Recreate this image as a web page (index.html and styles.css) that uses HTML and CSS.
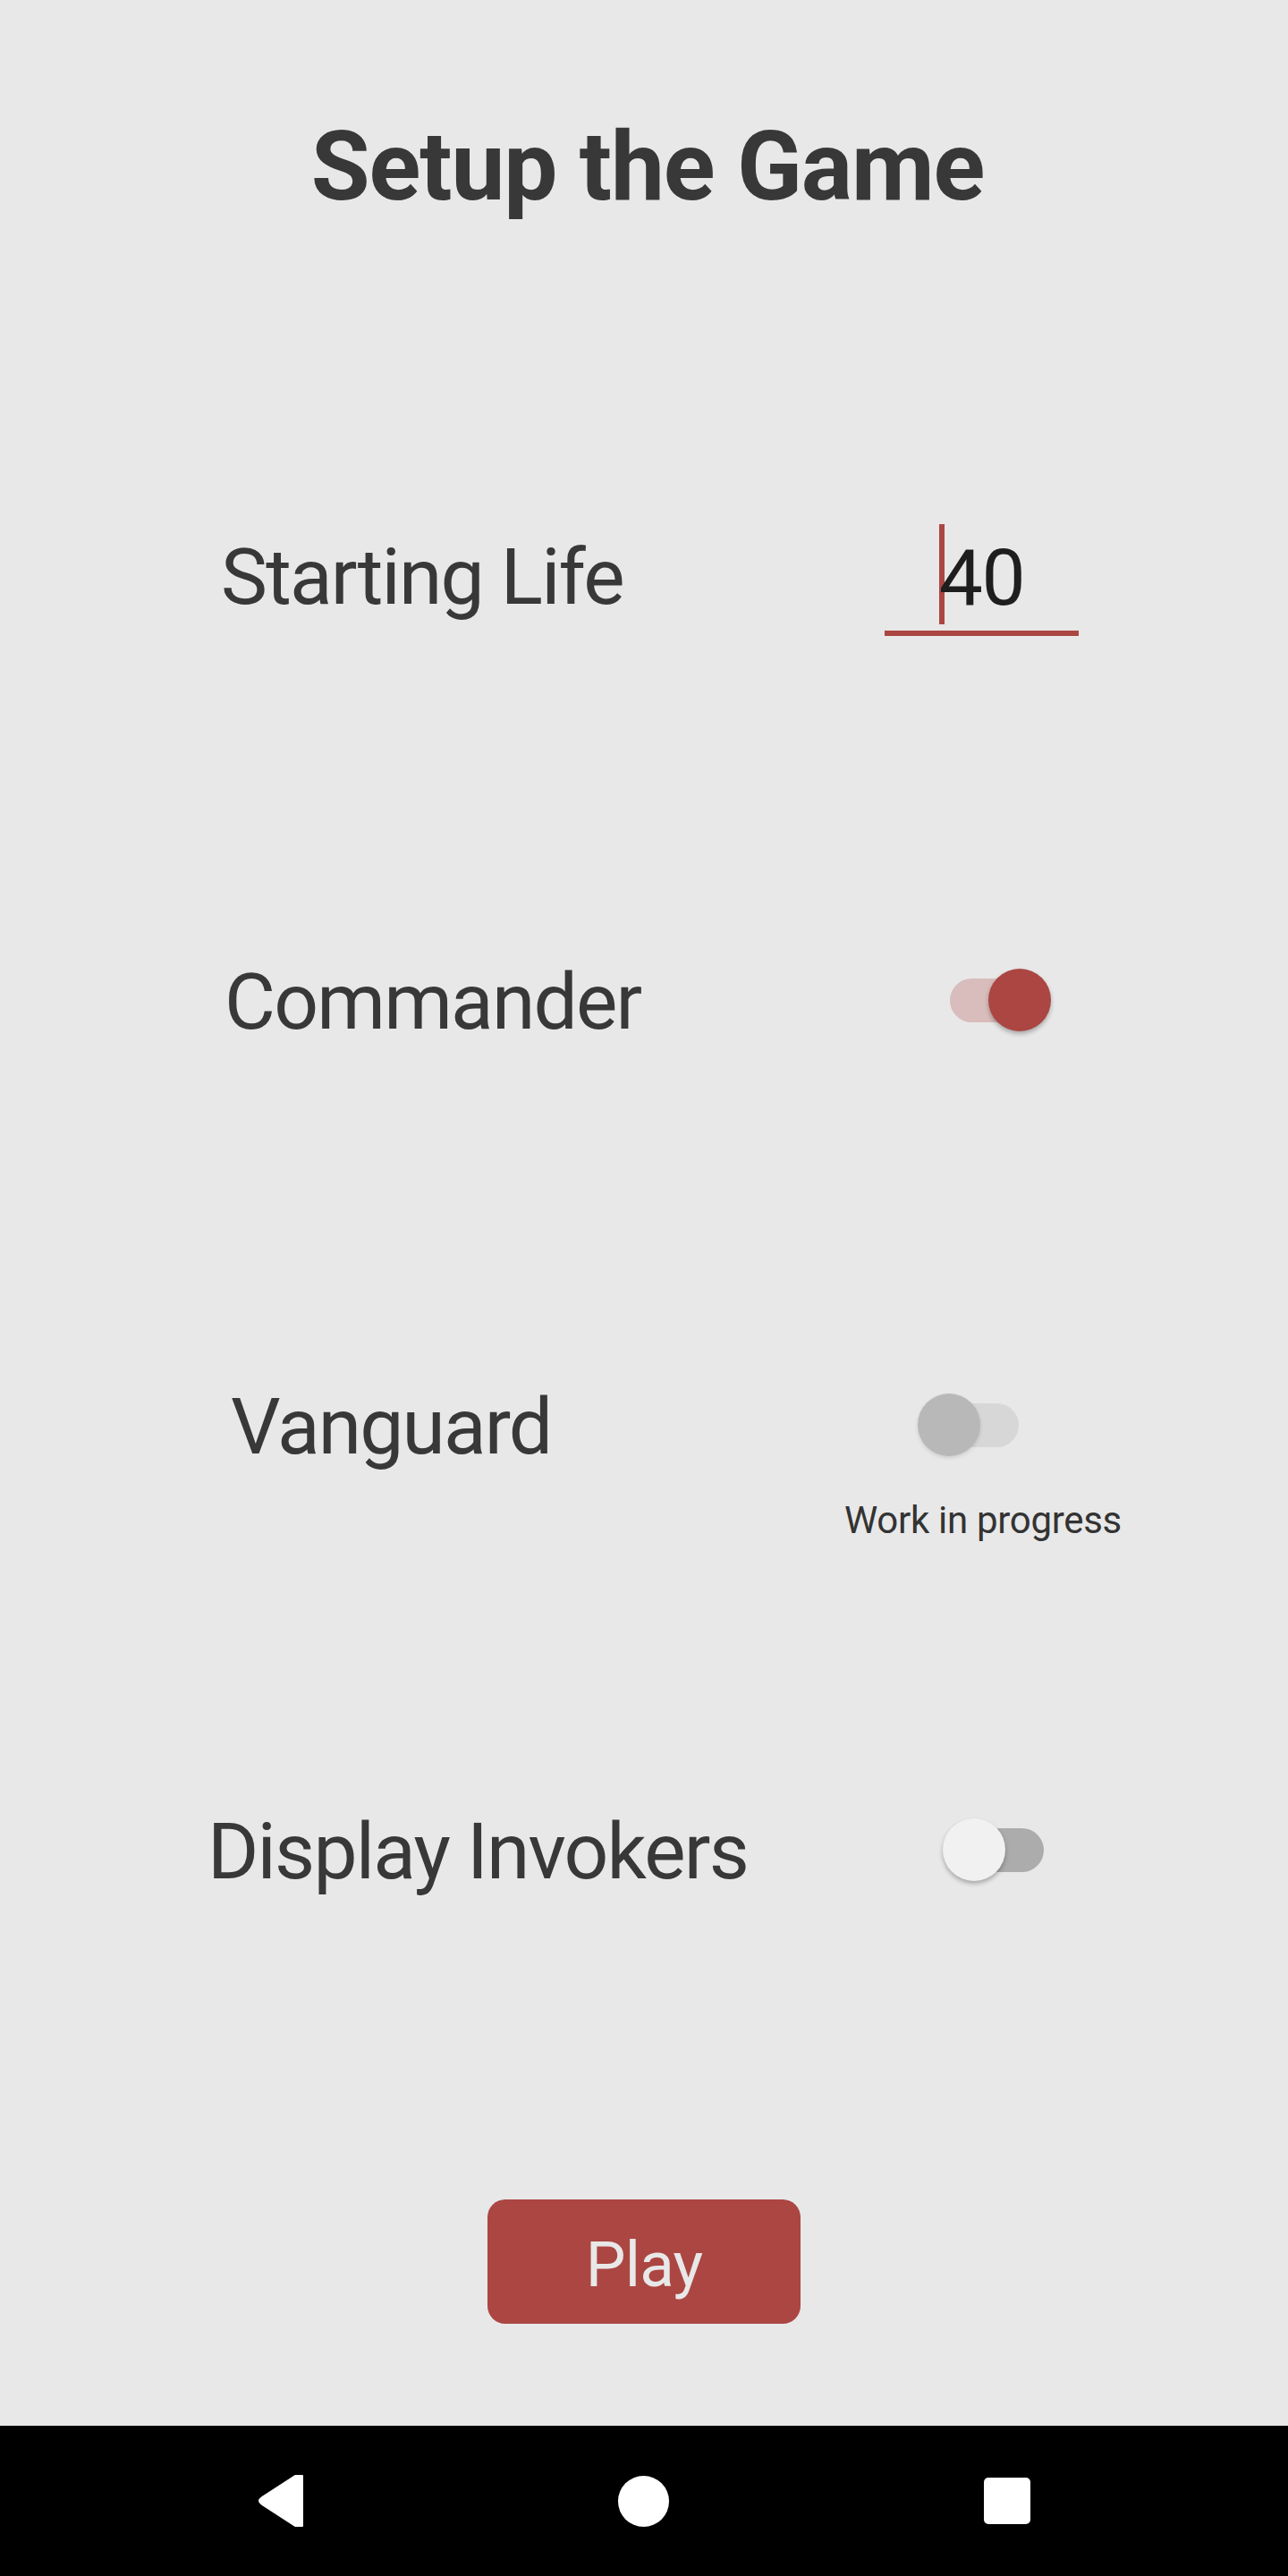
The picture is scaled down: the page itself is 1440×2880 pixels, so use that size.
FILE: index.html
```html
<!DOCTYPE html>
<html lang="en">
<head>
<meta charset="utf-8">
<title>Setup the Game</title>
<link rel="stylesheet" href="styles.css">
</head>
<body>
<div class="screen">
  <h1 class="title">Setup the Game</h1>
  <div class="settings">
    <div class="row row-life">
      <div class="label">Starting Life</div>
      <div class="control">
        <div class="field">
          <div class="field-text"><span class="caret"></span>40</div>
          <div class="field-line"></div>
        </div>
      </div>
    </div>
    <div class="row row-commander">
      <div class="label">Commander</div>
      <div class="control">
        <div class="switch switch-on"><span class="track"></span><span class="thumb"></span></div>
      </div>
    </div>
    <div class="row row-vanguard">
      <div class="label">Vanguard</div>
      <div class="control">
        <div class="switch switch-disabled"><span class="track"></span><span class="thumb"></span></div>
      </div>
      <div class="caption">Work in progress</div>
    </div>
    <div class="row row-invokers">
      <div class="label">Display Invokers</div>
      <div class="control">
        <div class="switch switch-off"><span class="track"></span><span class="thumb"></span></div>
      </div>
    </div>
  </div>
  <button class="play">Play</button>
</div>
<nav class="navbar">
  <svg class="nav-back" width="60" height="60" viewBox="0 0 60 60"><path d="M52 2 L52 58 L44 58 L7 34 Q1 30 7 26 L44 2 Z" fill="#fff" stroke="#fff" stroke-width="2" stroke-linejoin="round"/></svg>
  <span class="nav-home"></span>
  <span class="nav-recent"></span>
</nav>
</body>
</html>
```

FILE: styles.css
```css
html, body {
  margin: 0;
  padding: 0;
}
body {
  background: #e8e8e8;
  font-family: Roboto, "Noto Sans", sans-serif;
  color: #383838;
  width: 1440px;
}
.screen {
  height: 2712px;
  display: flex;
  flex-direction: column;
}
.title {
  margin: 0;
  padding-top: 133px;
  padding-left: 8px;
  font-size: 107px;
  line-height: 107px;
  font-weight: 700;
  letter-spacing: -1.1px;
  text-align: center;
  color: #383838;
}
.settings {
  margin-top: 336px;
  display: flex;
  flex-direction: column;
}
.row {
  display: grid;
  grid-template-columns: 890px 420px;
  grid-template-rows: 140px;
  align-items: center;
  margin-bottom: 335px;
}
.row-vanguard {
  margin-bottom: 280px;
}
.row-invokers {
  margin-bottom: 0;
}
.label {
  font-size: 87.5px;
  line-height: 1;
  letter-spacing: -1.8px;
  white-space: nowrap;
}
.row-life .label { padding-left: 247px; }
.row-commander .label { padding-left: 251px; }
.row-vanguard .label { padding-left: 258px; }
.row-invokers .label { padding-left: 232px; }

.control {
  display: flex;
  justify-content: center;
  align-items: center;
}
.field {
  width: 217px;
  margin-top: 5px;
  margin-right: 5px;
}
.field-text {
  font-size: 87.5px;
  line-height: 112px;
  letter-spacing: -1.5px;
  text-align: center;
  color: #1e1e1e;
}
.caret {
  display: inline-block;
  width: 6px;
  height: 112px;
  margin-right: -6px;
  vertical-align: -22px;
  background: #ab4642;
}
.field-line {
  margin-top: 3px;
  height: 6px;
  background: #ab4642;
}
.switch {
  position: relative;
  width: 116px;
  height: 70px;
}
.track {
  position: absolute;
  left: 3px;
  right: 3px;
  top: 11px;
  height: 49px;
  border-radius: 25px;
}
.thumb {
  position: absolute;
  top: 0;
  width: 70px;
  height: 70px;
  border-radius: 50%;
  box-shadow: 0 3px 5px rgba(0, 0, 0, 0.28);
}
.switch-on { margin-left: 34px; }
.switch-on .track { background: #d9bcbc; }
.switch-on .thumb { right: 0; background: #ab4642; }
.switch-disabled { margin-right: 32px; margin-top: -6px; }
.switch-disabled .track { background: #d7d7d7; }
.switch-disabled .thumb { left: 0; background: #b8b8b8; box-shadow: 0 2px 4px rgba(0, 0, 0, 0.12); }
.switch-off { margin-left: 24px; margin-top: -6px; }
.switch-off .track { background: #acacac; }
.switch-off .thumb { left: 0; background: #f1f1f1; }
.row-commander .switch { margin-top: -6px; }

.caption {
  grid-column: 2;
  margin-top: 13px;
  text-align: center;
  font-size: 42px;
  line-height: 42px;
  letter-spacing: -0.3px;
  color: #333;
  padding-right: 2px;
}
.play {
  margin: 318px auto 0;
  width: 350px;
  height: 139px;
  border: none;
  border-radius: 20px;
  background: #ab4642;
  color: #e8e8e8;
  font-family: Roboto, "Noto Sans", sans-serif;
  font-size: 71px;
  line-height: 1;
  letter-spacing: -0.8px;
  padding: 5px 0 0;
  display: flex;
  align-items: center;
  justify-content: center;
}
.navbar {
  height: 168px;
  background: #000;
  display: flex;
  align-items: center;
}
.nav-back {
  margin-left: 286px;
  margin-top: 0;
}
.nav-home {
  width: 57px;
  height: 57px;
  border-radius: 50%;
  background: #fff;
  margin-left: 345px;
}
.nav-recent {
  width: 52px;
  height: 52px;
  border-radius: 5px;
  background: #fff;
  margin-left: 352px;
}
```
